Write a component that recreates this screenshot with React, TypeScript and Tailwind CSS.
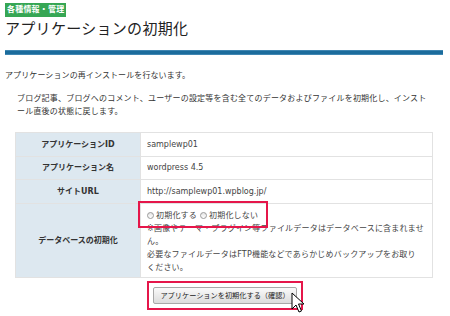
const font = "font-['DejaVu_Sans','Noto_Sans_CJK_JP',sans-serif]";

function Radio() {
  return (
    <span className="inline-block w-[7px] h-[7px] rounded-full border border-[#9a9a9a] bg-gradient-to-b from-[#e4e4e4] to-white mr-[2px]" />
  );
}

function Row({ label, children, h }: { label: string; children: React.ReactNode; h: string }) {
  return (
    <div className={`grid grid-cols-[125px_1fr] border-b border-[#e2e2e2] ${h}`}>
      <div className="bg-[#dde8f0] border-r border-[#e2e2e2] flex items-center justify-center font-bold text-[8px] text-[#333]">
        {label}
      </div>
      <div className="flex items-center px-[6px] text-[8px] text-[#444]">{children}</div>
    </div>
  );
}

export default function App() {
  return (
    <div className={`relative w-[450px] h-[316px] overflow-hidden bg-white text-[#333] leading-none ${font}`}>
      <div className="pl-[5px] pr-[7px] pt-[3px]">
        {/* header */}
        <div className="w-fit h-[14px] px-[2px] bg-[#36a654] text-white font-bold text-[8px] leading-[14px] tracking-[0.2px]">
          各種情報・管理
        </div>
        <h1 className="mt-[2px] text-[15px] leading-[20px] text-[#222] tracking-[0.3px]">
          アプリケーションの初期化
        </h1>
        <div className="mt-[11px] h-[5px] bg-[#1b6c9c] border-y border-[#3f86b2]" />

        <p className="mt-[14px] text-[8px] leading-[13px] tracking-[0.1px] text-[#333]">
          アプリケーションの再インストールを行ないます。
        </p>
        <p className="mt-[10px] pl-[12px] text-[8px] leading-[13px] tracking-[0.2px] text-[#333]">
          ブログ記事、ブログへのコメント、ユーザーの設定等を含む全てのデータおよびファイルを初期化し、インスト
          <br />
          ール直後の状態に戻します。
        </p>

        {/* table */}
        <div className="mt-[14px] ml-[10px] w-[418px] border-t border-x border-[#e2e2e2]">
          <Row label="アプリケーションID" h="h-[24px]">samplewp01</Row>
          <Row label="アプリケーション名" h="h-[23px]">wordpress 4.5</Row>
          <Row label="サイトURL" h="h-[24px]">http://samplewp01.wpblog.jp/</Row>
          <div className="grid grid-cols-[125px_1fr] border-b border-[#e2e2e2] h-[74px]">
            <div className="bg-[#dde8f0] border-r border-[#e2e2e2] flex items-center justify-center font-bold text-[8px] text-[#333]">
              データベースの初期化
            </div>
            <div className="px-[6px] pt-[5px] text-[8px] leading-[13px] tracking-[0.2px] text-[#444]">
              <div className="flex items-center">
                <Radio />
                <span>初期化する</span>
                <span className="ml-[3px]" />
                <Radio />
                <span>初期化しない</span>
              </div>
              <div>
                ※画像やテーマ・プラグイン等ファイルデータはデータベースに含まれませ
                <br />
                ん。
                <br />
                必要なファイルデータはFTP機能などであらかじめバックアップをお取り
                <br />
                ください。
              </div>
            </div>
          </div>
        </div>

        {/* button */}
        <div className="flex justify-center mt-[3px] pl-[2px]">
          <div className="border-2 border-[#e5164a] px-[4px] pt-[2px] pb-[4px]">
            <button className="h-[17px] px-[6px] border border-[#a8a8a8] rounded-[2px] bg-gradient-to-b from-[#fafafa] to-[#dcdcdc] text-[7.2px] leading-[15px] text-[#222]">
              アプリケーションを初期化する（確認）
            </button>
          </div>
        </div>
      </div>

      {/* annotation box around radios */}
      <div className="absolute left-[138px] top-[201px] w-[130px] h-[27px] border-2 border-[#e5164a]" />

      {/* mouse cursor */}
      <svg className="absolute left-[291px] top-[292px]" width="14" height="22" viewBox="0 0 14 22">
        <path
          d="M1 1 L1 17 L5 13 L8 20 L10.5 19 L7.5 12 L13 12 Z"
          fill="#fff"
          stroke="#000"
          strokeWidth="1"
          strokeLinejoin="round"
        />
      </svg>
    </div>
  );
}
